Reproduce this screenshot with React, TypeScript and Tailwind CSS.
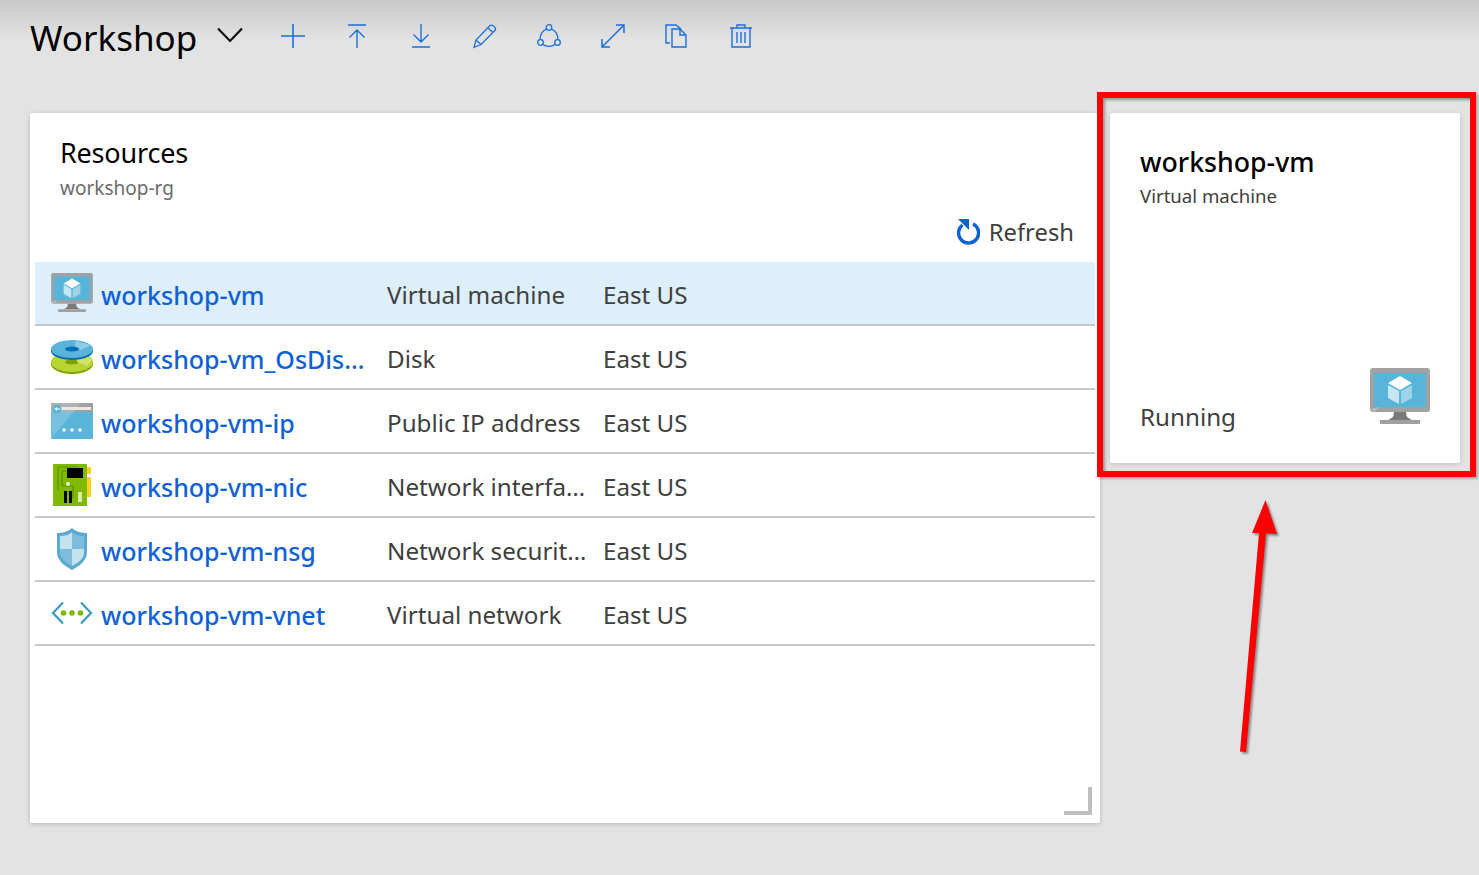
import type { ReactNode } from 'react';

const FONT = "font-['Noto_Sans','Open_Sans',sans-serif]";

function VmIcon({ className }: { className: string }) {
  return (
    <svg viewBox="0 0 60 56" className={className}>
      <rect x="0" y="0" width="60" height="44" rx="3" fill="#a0a1a2" />
      <rect x="4" y="5" width="52" height="34" fill="#59b4d9" />
      <path d="M0 41 L10 39 L4 44 Z" fill="#b8b8b8" />
      <path d="M24 44 h12 c0 5 2 6 6 8 h-24 c4-2 6-3 6-8z" fill="#7a7a7a" />
      <rect x="10" y="52" width="40" height="4" fill="#a0a1a2" />
      <path d="M30 8 L42 15 L30 22 L18 15 Z" fill="#fff" />
      <path d="M18 17 L29 23 L29 36 L18 30 Z" fill="#c6e6f4" />
      <path d="M42 17 L31 23 L31 36 L42 30 Z" fill="#9cd3e9" />
    </svg>
  );
}

function DiskIcon() {
  return (
    <svg viewBox="0 0 42 36" className="h-[36px] w-[42px]">
      <ellipse cx="21" cy="25" rx="21" ry="10" fill="#7fa400" />
      <ellipse cx="21" cy="23" rx="21" ry="10" fill="#b8d432" />
      <ellipse cx="21" cy="23" rx="7" ry="2.6" fill="#7fa400" />
      <path d="M26 14 L42 20 L36 27 L26 23 Z" fill="#cfe26d" />
      <ellipse cx="21" cy="12" rx="21" ry="9" fill="#0a6db5" />
      <ellipse cx="21" cy="10" rx="21" ry="9" fill="#59b4d9" />
      <path d="M25 2 L40 6 L30 11 L24 9 Z" fill="#8fcde6" />
      <ellipse cx="21" cy="10" rx="7" ry="2.5" fill="#0a6db5" />
    </svg>
  );
}

function IpIcon() {
  return (
    <svg viewBox="0 0 42 36" className="h-[36px] w-[42px]">
      <rect x="0" y="0" width="42" height="36" rx="1.5" fill="#59b4d9" />
      <path d="M0 9 H42 V0 H0 Z" fill="#a0a1a2" />
      <path d="M0 36 L30 0 H0 Z" fill="#fff" opacity="0.18" />
      <rect x="10" y="4" width="30" height="3" fill="#e8e8e8" />
      <circle cx="6" cy="6" r="4.5" fill="#59b4d9" />
      <path d="M3.5 6 L6 4 V8 Z M6 5.4 H9 V6.6 H6 Z" fill="#fff" />
      <circle cx="13" cy="27" r="1.8" fill="#fff" />
      <circle cx="21" cy="27" r="1.8" fill="#fff" />
      <circle cx="29" cy="27" r="1.8" fill="#fff" />
    </svg>
  );
}

function NicIcon() {
  return (
    <svg viewBox="0 0 38 42" className="h-[42px] w-[38px]">
      <rect x="0" y="0" width="34" height="42" fill="#7fba00" />
      <path d="M5 3 H24 M5 3 V26 M9 7 H20 M9 7 V22 M9 22 H20 V34" stroke="#5e9300" strokeWidth="1.2" fill="none" />
      <rect x="14" y="4" width="16" height="10" fill="#000" />
      <circle cx="15" cy="20" r="2" fill="#e8f0d0" />
      <rect x="11" y="27" width="3" height="12" fill="#000" />
      <rect x="16" y="27" width="3" height="12" fill="#000" />
      <rect x="25" y="28" width="4" height="10" fill="#dbe8b0" />
      <rect x="34" y="3" width="4" height="7" fill="#fcd116" />
      <rect x="34" y="13" width="4" height="20" fill="#fcd116" />
    </svg>
  );
}

function NsgIcon() {
  return (
    <svg viewBox="0 0 32 42" className="h-[42px] w-[32px]">
      <path d="M16 0 C20 4 26 5 31 5 V24 C31 33 23 38 16 42 C9 38 1 33 1 24 V5 C6 5 12 4 16 0Z" fill="#59a9d0" />
      <path d="M16 4 C19 7 24 8 28 8 V21 H16 Z" fill="#7dbcdc" />
      <path d="M16 4 C13 7 8 8 4 8 V21 H16 Z" fill="#c3e1ef" />
      <path d="M4 21 H16 V38 C10 35 4 31 4 24 Z" fill="#7dbcdc" />
      <path d="M28 21 H16 V38 C22 35 28 31 28 24 Z" fill="#c3e1ef" />
    </svg>
  );
}

function VnetIcon() {
  return (
    <svg viewBox="0 0 42 24" className="h-[24px] w-[42px]">
      <path d="M12 1.5 L2 12 L12 22.5 M30 1.5 L40 12 L30 22.5" fill="none" stroke="#3999c6" strokeWidth="2.2" />
      <circle cx="12.5" cy="12" r="2.8" fill="#7fba00" />
      <circle cx="21" cy="12" r="2.8" fill="#7fba00" />
      <circle cx="29.5" cy="12" r="2.8" fill="#7fba00" />
    </svg>
  );
}

const TOOLBAR: ReactNode[] = [
  <path key="add" d="M12 0 V24 M0 12 H24" strokeWidth="1.6" />,
  <path key="up" d="M3 1 H21 M12 24 V6 M4.5 13.5 L12 6 L19.5 13.5" strokeWidth="1.4" />,
  <path key="down" d="M3 23 H21 M12 0 V18 M4.5 10.5 L12 18 L19.5 10.5" strokeWidth="1.4" />,
  <path key="edit" d="M1 23.5 L3 16 L17 1.5 C19 0 23 3 22.5 6 L8 20.5 Z M3 16 L8 20.5 M15 4 L20 8.5" strokeWidth="1.3" />,
  <g key="share" strokeWidth="1.3">
    <circle cx="12" cy="3.5" r="2.8" />
    <circle cx="3.5" cy="18.5" r="2.8" />
    <circle cx="20.5" cy="18.5" r="2.8" />
    <path d="M9.5 5 C5 7 3 11 3 15.7 M14.5 5 C19 7 21 11 21 15.7 M6 20.5 C9 23 15 23 18 20.5" />
  </g>,
  <path key="expand" d="M1 23 L23 1 M15 1 H23 V9 M1 15 V23 H9" strokeWidth="1.5" />,
  <path key="copy" d="M5 19 H1 V1 H11 L16 5 M7 5 H15 L21 11 V23 H7 Z M15 5 V11 H21" strokeWidth="1.4" />,
  <path key="delete" d="M1 4 H23 M8 4 V1 H16 V4 M3 4 V23 H21 V4 M8 8 V19 M12 8 V19 M16 8 V19" strokeWidth="1.4" />,
];

const RESOURCES = [
  { name: 'workshop-vm', type: 'Virtual machine', icon: <VmIcon className="h-[39px] w-[42px]" />, selected: true },
  { name: 'workshop-vm_OsDisk_1', type: 'Disk', icon: <DiskIcon /> },
  { name: 'workshop-vm-ip', type: 'Public IP address', icon: <IpIcon /> },
  { name: 'workshop-vm-nic', type: 'Network interface', icon: <NicIcon /> },
  { name: 'workshop-vm-nsg', type: 'Network security group', icon: <NsgIcon /> },
  { name: 'workshop-vm-vnet', type: 'Virtual network', icon: <VnetIcon /> },
];

export default function App() {
  return (
    <div className={`${FONT} relative h-[875px] w-[1479px] overflow-hidden bg-[#e3e3e3] bg-gradient-to-b from-[#c8c8c8] to-[#e3e3e3] bg-[length:100%_40px] bg-no-repeat`}>
      {/* Toolbar */}
      <div className="flex h-[74px] items-center pl-[30px]">
        <h1 className="pt-[2px] text-[35px] leading-[44px] text-black">Workshop</h1>
        <svg viewBox="0 0 26 16" className="mb-[4px] ml-[20px] h-[16px] w-[26px]" fill="none" stroke="#111" strokeWidth="2.2">
          <path d="M1 1.5 L13 14 L25 1.5" />
        </svg>
        <div className="mb-[2px] ml-[38px] flex gap-[40px]">
          {TOOLBAR.map((icon, i) => (
            <svg key={i} viewBox="0 0 24 24" className="h-[24px] w-[24px] overflow-visible" fill="none" stroke="#1a6fdb">
              {icon}
            </svg>
          ))}
        </div>
      </div>

      <div className="mt-[39px] flex items-start pl-[30px]">
        {/* Resources panel */}
        <section className="relative h-[710px] w-[1070px] rounded-[2px] bg-white shadow-[0_1px_5px_rgba(0,0,0,0.2)]">
          <div className="pl-[30px] pt-[24px]">
            <h2 className="text-[27px] leading-[32px] tracking-[-0.2px] text-black">Resources</h2>
            <p className="mt-[7px] text-[19px] leading-[24px] text-[#6b6b6b]">workshop-rg</p>
          </div>
          <div className="mt-[11px] flex h-[51px] items-center justify-end gap-[9px] pb-[9px] pr-[26px]">
            <svg viewBox="0 0 24 26" className="h-[26px] w-[24px]" fill="none">
              <path d="M6.5 6 A10 10 0 1 0 17 5" stroke="#0f62d6" strokeWidth="3.4" />
              <path d="M2 0 H13 V11 Z" fill="#0f62d6" />
            </svg>
            <span className="text-[23.8px] leading-[32px] text-[#404040]">Refresh</span>
          </div>
          <div className="mx-[5px]">
            {RESOURCES.map((r) => (
              <div
                key={r.name}
                className={`flex h-[64px] items-center border-b-2 border-[#c8c8c8] text-[24.2px] leading-[34px] ${r.selected ? 'bg-[#ddeefd]' : 'bg-white'}`}
              >
                <div className="flex h-full w-[66px] items-center justify-center pb-[1px] pl-[8px]">{r.icon}</div>
                <span className="mr-[22px] w-[264px] truncate pt-[3px] text-[25px] font-medium text-[#0f62d6]">{r.name}</span>
                <span className="mr-[16px] w-[200px] truncate pt-[4px] text-[#404040]">{r.type}</span>
                <span className="pt-[4px] text-[#404040]">East US</span>
              </div>
            ))}
          </div>
          <div className="absolute bottom-[8px] right-[8px] h-[28px] w-[28px] border-b-4 border-r-4 border-[#bfbfbf]" />
        </section>

        {/* VM tile */}
        <section className="ml-[10px] flex h-[350px] w-[350px] flex-col rounded-[2px] bg-white px-[30px] pt-[31px] shadow-[0_1px_5px_rgba(0,0,0,0.15)]">
          <h2 className="text-[26.7px] font-medium leading-[36px] text-black">workshop-vm</h2>
          <p className="mt-[3px] text-[18.6px] leading-[26px] text-[#404040]">Virtual machine</p>
          <div className="mt-auto flex items-end justify-between pb-[30px]">
            <span className="text-[24.2px] leading-[32px] text-[#404040]">Running</span>
            <VmIcon className="mb-[9px] h-[56px] w-[60px]" />
          </div>
        </section>
      </div>

      {/* Red annotation box */}
      <div className="absolute left-[1097px] top-[92px] h-[385px] w-[379px] border-[6px] border-[#ff0000] shadow-[inset_2px_2px_3px_rgba(0,0,0,0.35),2px_2px_2px_rgba(0,0,0,0.25)]" />

      {/* Red annotation arrow */}
      <svg className="absolute left-[1225px] top-[490px] h-[270px] w-[70px] drop-shadow-[2px_2px_1px_rgba(0,0,0,0.4)]" viewBox="0 0 70 270">
        <path d="M40.5 10 L52 44 L41 43.5 L21 262 L15 261.5 L34 43 L27 43 Z" fill="#ff0000" />
      </svg>
    </div>
  );
}
